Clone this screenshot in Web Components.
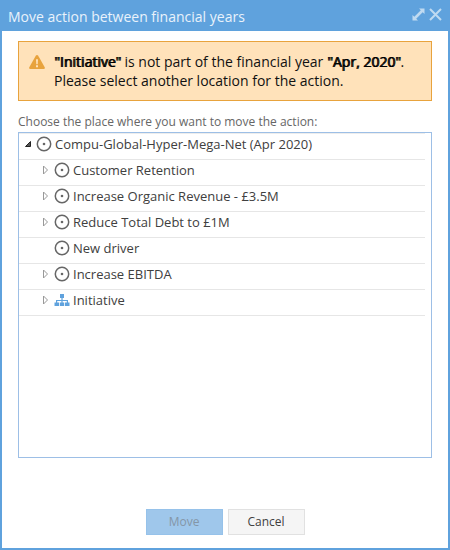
<!DOCTYPE html>
<html lang="en">
<head>
<meta charset="utf-8">
<title>Move action between financial years</title>
<style>
html, body { height: 100%; margin: 0; }
body { font-family: "Open Sans", "Noto Sans", sans-serif; font-size: 13px; color: #404040; background: #fff; }
</style>
</head>
<body>
<modal-window heading="Move action between financial years">
  <alert-box><strong>"Initiative"</strong> is not part of the financial year <strong>"Apr, 2020"</strong>.<div>Please select another location for the action.</div></alert-box>
  <tree-panel label="Choose the place where you want to move the action:">
    <tree-row level="1" state="open" icon="driver">Compu-Global-Hyper-Mega-Net (Apr 2020)</tree-row>
    <tree-row level="2" state="closed" icon="driver">Customer Retention</tree-row>
    <tree-row level="2" state="closed" icon="driver">Increase Organic Revenue - £3.5M</tree-row>
    <tree-row level="2" state="closed" icon="driver">Reduce Total Debt to £1M</tree-row>
    <tree-row level="2" state="leaf" icon="driver">New driver</tree-row>
    <tree-row level="2" state="closed" icon="driver">Increase EBITDA</tree-row>
    <tree-row level="2" state="closed" icon="initiative">Initiative</tree-row>
  </tree-panel>
  <action-button slot="footer" kind="primary" disabled>Move</action-button>
  <action-button slot="footer">Cancel</action-button>
</modal-window>
<script>
class BaseElement extends HTMLElement {
  connectedCallback() {
    if (!this.shadowRoot) this.attachShadow({ mode: "open" }).innerHTML = this.render();
  }
}

customElements.define("modal-window", class extends BaseElement {
  render() {
    return `<style>
      :host { display: flex; flex-direction: column; box-sizing: border-box; min-height: 100%; border: 2px solid #5fa2dd; border-top: 0; background: #fff; }
      header { display: flex; align-items: center; justify-content: space-between; height: 31px; padding: 0 6px; background: #5fa2dd; }
      h1 { margin: 0; padding-top: 2px; font-size: 14px; line-height: 20px; font-weight: 400; color: #e9f2fb; }
      .tools { display: flex; gap: 4px; padding-bottom: 3px; }
      .tools button { display: block; width: 13px; height: 13px; margin: 0; padding: 0; border: 0; background: none; color: #bfdaf1; }
      svg { display: block; }
      main { flex: 1; display: flex; flex-direction: column; padding: 10px 16px 0; }
      footer { display: flex; justify-content: center; gap: 5px; padding: 51px 0 13px; }
    </style>
    <header>
      <h1>${this.getAttribute("heading")}</h1>
      <div class="tools">
        <button type="button" aria-label="Maximize"><svg width="13" height="13" viewBox="0 0 13 13" fill="currentColor"><path d="M7 0.500h5.500V6L10.700 4.200 4.200 10.700 6 12.500H.5V7l1.800 1.800 6.500-6.500z"/></svg></button>
        <button type="button" aria-label="Close"><svg width="13" height="13" viewBox="0 0 13 13" fill="none" stroke="currentColor" stroke-width="2"><path d="M1 1l11 11M12 1L1 12"/></svg></button>
      </div>
    </header>
    <main><slot></slot></main>
    <footer><slot name="footer"></slot></footer>`;
  }
});

customElements.define("alert-box", class extends BaseElement {
  render() {
    return `<style>
      :host { display: flex; align-items: flex-start; gap: 9px; padding: 10px; border: 1px solid #e8a33d; background: #ffe2ba; color: #111; font-size: 14px; line-height: 19px; }
      svg { flex: none; margin-top: 2px; }
      .message { flex: 1; }
      ::slotted(strong) { font-weight: 400; color: #000; text-shadow: 1px 0 0 currentColor; }
    </style>
    <svg width="16" height="16" viewBox="0 0 16 16" aria-hidden="true"><path d="M8 1q.8 0 1.200.7l6.500 11.500q.7 1.500-1 1.800H1.300q-1.700-.3-1-1.800L6.800 1.700Q7.200 1 8 1z" fill="#e8a33d"/><path d="M7 5.200h2l-.3 5H7.300zM7 11.200h2v2H7z" fill="#ffe2ba"/></svg>
    <div class="message"><slot></slot></div>`;
  }
});

customElements.define("tree-panel", class extends BaseElement {
  render() {
    return `<style>
      :host { flex: 1; display: flex; flex-direction: column; padding-top: 11px; }
      .label { font-size: 12px; line-height: 20px; color: #666; }
      .tree { flex: 1; border: 1px solid #9dbfe6; padding-right: 6px; }
    </style>
    <div class="label" id="label">${this.getAttribute("label")}</div>
    <div class="tree" role="tree" aria-labelledby="label"><slot></slot></div>`;
  }
});

const ICONS = {
  driver: `<svg width="16" height="16" viewBox="0 0 16 16"><circle cx="8" cy="8" r="6.700" fill="none" stroke="#666" stroke-width="1.500"/><circle cx="8" cy="8" r="1.300" fill="#666"/></svg>`,
  initiative: `<svg width="16" height="16" viewBox="0 0 16 16" fill="#5fa2dd"><path d="M6 2h4v4H8.600v2H14v2.500h1.500V14h-4.500v-3.500h1.800V9H8.600v1.500h1.600V14H5.800v-3.500h1.600V9H3.200v1.500H5V14H.5v-3.500H2V8h5.400V6H6z"/></svg>`
};
const ARROWS = {
  open: `<svg width="8" height="10" viewBox="0 0 8 10"><path d="M6.500 2.500v5H1.500z" fill="#555" stroke="#222"/></svg>`,
  closed: `<svg width="8" height="10" viewBox="0 0 8 10"><path d="M1.500 1v8L5.500 5z" fill="#fff" stroke="#999"/></svg>`,
  leaf: ""
};

customElements.define("tree-row", class extends BaseElement {
  render() {
    const level = this.getAttribute("level");
    this.setAttribute("role", "treeitem");
    this.setAttribute("aria-level", level);
    return `<style>
      :host { display: flex; align-items: center; box-sizing: border-box; height: 26px; border-bottom: 1px solid #e6e6e6; line-height: 20px; padding: 0 0 5px 5px; }
      :host(:first-child) { height: 27px; border-top: 1px solid #ededed; }
      :host([level="2"]) { padding-left: 23px; }
      svg { display: block; }
      .arrow { flex: none; width: 12px; }
      .icon { flex: none; width: 16px; margin-right: 3px; }
    </style>
    <span class="arrow">${ARROWS[this.getAttribute("state")]}</span>
    <span class="icon">${ICONS[this.getAttribute("icon")]}</span>
    <span><slot></slot></span>`;
  }
});

customElements.define("action-button", class extends BaseElement {
  render() {
    return `<style>
      button { display: block; min-width: 77px; height: 26px; margin: 0; padding: 0 12px 2px; border: 1px solid #e1e1e1; background: #f5f5f5; color: #404040; font: 12px "Open Sans", "Noto Sans", sans-serif; }
      :host([kind="primary"]) button { border-color: #96c2ea; background: #9fc7eb; color: #8496a7; }
    </style>
    <button type="button" ${this.hasAttribute("disabled") ? "disabled" : ""}><slot></slot></button>`;
  }
});
</script>
</body>
</html>
